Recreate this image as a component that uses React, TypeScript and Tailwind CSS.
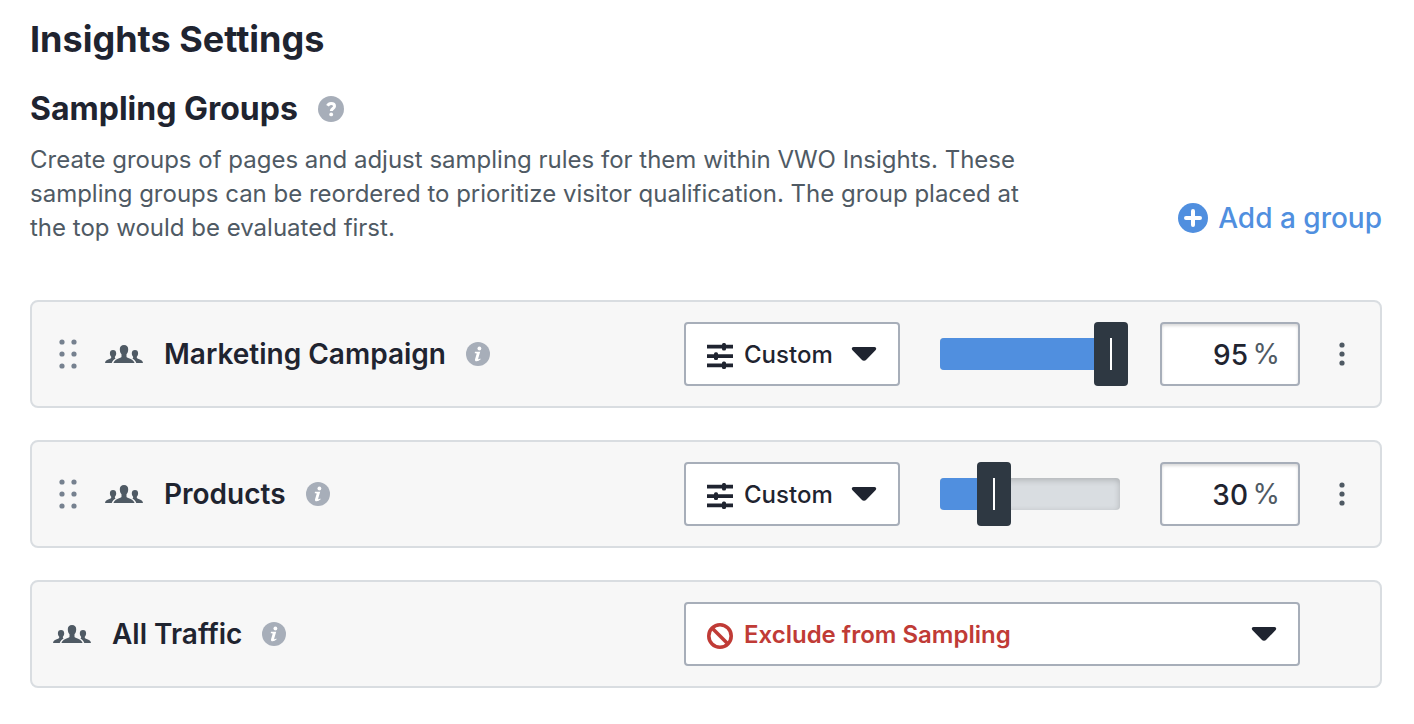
import { useState } from 'react';

type Group = {
  id: string;
  name: string;
  mode: 'custom' | 'exclude';
  rate: number;
};

const initialGroups: Group[] = [
  { id: 'marketing', name: 'Marketing Campaign', mode: 'custom', rate: 95 },
  { id: 'products', name: 'Products', mode: 'custom', rate: 30 },
];

function HelpIcon() {
  return (
    <svg viewBox="0 0 26 26" className="w-[26px] h-[26px]" aria-hidden="true">
      <circle cx="13" cy="13" r="13" fill="#a7aeb9" />
      <path
        d="M9.500 9.800C10.300 8.300 11.500 7.500 13.100 7.500c2 0 3.400 1 3.400 2.700 0 2.400-3.200 2.100-3.200 4.800"
        fill="none"
        stroke="#fff"
        strokeWidth="3"
      />
      <circle cx="13.200" cy="18.400" r="1.900" fill="#fff" />
    </svg>
  );
}

function InfoIcon() {
  return (
    <svg viewBox="0 0 24 24" className="w-6 h-6" aria-hidden="true">
      <circle cx="12" cy="12" r="12" fill="#a7aeb9" />
      <circle cx="13.400" cy="6.500" r="1.900" fill="#fff" />
      <path d="M9 9.800h5.200l-2 6.800c-.2.700.1.900.6.700.5-.2.900-.5 1.400-.9l.5.800c-1.300 1.300-2.700 2-4 2-1.500 0-2-.9-1.600-2.300l1.500-5c.1-.5-.1-.7-.6-.7H8.700z" fill="#fff" />
    </svg>
  );
}

function PeopleIcon() {
  return (
    <svg viewBox="0 0 38 18" className="w-[38px] h-[18px]" fill="#4f5a64" aria-hidden="true">
      <path d="M19 0c2.700 0 4.300 1.700 4.200 4.300 0 2.200-.6 3.800-1.700 5v2.100c0 .7.400 1 1.200 1.300 3.500 1.200 6 2.300 6.900 5.300H8.400c.9-3 3.400-4.100 6.900-5.300.8-.3 1.200-.6 1.200-1.300V9.300c-1.100-1.200-1.700-2.800-1.700-5C14.700 1.700 16.300 0 19 0z" />
      <path d="M8 5c2 0 3.300 1.200 3.200 3.300 0 1.600-.5 2.700-1.300 3.500v1c0 .4.300.6.800.8-1.800 1-3.200 2.200-4 4.400H0c.3-2.300 1.700-3.100 4.300-4 1.300-.4 1.900-.8 1.900-1.500v-.7c-.8-.9-1.300-2-1.300-3.500C4.800 6.200 6 5 8 5z" />
      <path d="M30 5c-2 0-3.300 1.200-3.200 3.300 0 1.600.5 2.700 1.300 3.500v1c0 .4-.3.6-.8.8 1.800 1 3.200 2.200 4 4.400H38c-.3-2.300-1.700-3.100-4.300-4-1.300-.4-1.900-.8-1.900-1.500v-.7c.8-.9 1.300-2 1.300-3.500C33.200 6.200 32 5 30 5z" />
    </svg>
  );
}

function PlusIcon() {
  return (
    <svg viewBox="0 0 30 30" className="w-[30px] h-[30px]" aria-hidden="true">
      <circle cx="15" cy="15" r="15" fill="#508fdf" />
      <path d="M15 8v14M8 15h14" stroke="#fff" strokeWidth="4" strokeLinecap="round" />
    </svg>
  );
}

function DotsGrid() {
  return (
    <svg viewBox="0 0 18 30" className="w-[18px] h-[30px]" fill="#76818f" aria-hidden="true">
      {[3, 15, 27].map((y) => (
        <g key={y}>
          <circle cx="3" cy={y} r="2.600" />
          <circle cx="15" cy={y} r="2.600" />
        </g>
      ))}
    </svg>
  );
}

function MoreIcon() {
  return (
    <svg viewBox="0 0 6 24" className="w-[6px] h-6" fill="#4f5a64" aria-hidden="true">
      <circle cx="3" cy="3" r="2.600" />
      <circle cx="3" cy="12" r="2.600" />
      <circle cx="3" cy="21" r="2.600" />
    </svg>
  );
}

function SlidersIcon() {
  return (
    <svg viewBox="0 0 26 26" className="w-[26px] h-[26px]" fill="#1f2430" aria-hidden="true">
      <path d="M0 1.800h26v3.800H0zM0 11.200h26V15H0zM0 20.500h26v3.800H0z" />
      <rect x="15" y="0" width="4" height="7.400" rx="1.500" />
      <rect x="7" y="9.300" width="4" height="7.600" rx="1.500" />
      <rect x="15" y="18.600" width="4" height="7.400" rx="1.500" />
    </svg>
  );
}

function BanIcon() {
  return (
    <svg viewBox="0 0 26 26" className="w-[26px] h-[26px]" fill="none" stroke="#c03b36" strokeWidth="3.600" aria-hidden="true">
      <circle cx="13" cy="13" r="11.200" />
      <path d="M5 5l16 16" />
    </svg>
  );
}

function CaretIcon() {
  return (
    <svg viewBox="0 0 26 14" className="w-[26px] h-[14px]" fill="#1f2430" aria-hidden="true">
      <path d="M2.500 0h21c1.600 0 2.200 1.700 1.200 2.900l-9.200 9.700c-1.500 1.600-3.500 1.600-5 0L1.300 2.900C.3 1.700.9 0 2.500 0z" />
    </svg>
  );
}

function ModeSelect({ name, mode, onChange, className }: {
  name: string;
  mode: Group['mode'];
  onChange: (mode: Group['mode']) => void;
  className: string;
}) {
  return (
    <div className={`relative ${className}`}>
      <select
        aria-label={`Sampling mode for ${name}`}
        value={mode}
        onChange={(e) => onChange(e.target.value as Group['mode'])}
        className={`w-full h-16 pt-[2px] pl-[58px] pr-12 appearance-none bg-white border-2 border-[#a7aeb9] rounded text-2xl cursor-pointer ${
          mode === 'custom' ? 'font-medium text-[#1f2430]' : 'font-semibold text-[#c03b36]'
        }`}
      >
        <option value="custom">Custom</option>
        <option value="exclude">Exclude from Sampling</option>
      </select>
      <span className="absolute left-[23px] top-[21px] pointer-events-none">
        {mode === 'custom' ? <SlidersIcon /> : <BanIcon />}
      </span>
      <span className="absolute right-[23px] top-[25px] pointer-events-none">
        <CaretIcon />
      </span>
    </div>
  );
}

function RateSlider({ name, rate, onChange }: {
  name: string;
  rate: number;
  onChange: (rate: number) => void;
}) {
  return (
    <div className="relative w-[180px] h-16 shrink-0 flex items-center">
      <div className="w-full h-8 rounded bg-[#d9dde1] shadow-[inset_0_2px_6px_rgba(0,0,0,0.2)] overflow-hidden">
        <div className="h-full bg-[#508fdf]" style={{ width: `${rate}%` }} />
      </div>
      {/* wider than the track by half a thumb on each side, so the thumb centers on the value */}
      <input
        type="range"
        min={0}
        max={100}
        value={rate}
        aria-label={`Sampling rate slider for ${name}`}
        onChange={(e) => onChange(Number(e.target.value))}
        className="absolute top-0 -left-[17px] w-[214px] h-16 appearance-none bg-transparent cursor-pointer [&::-webkit-slider-thumb]:appearance-none [&::-webkit-slider-thumb]:w-[34px] [&::-webkit-slider-thumb]:h-16 [&::-webkit-slider-thumb]:rounded [&::-webkit-slider-thumb]:bg-[#2e3842] [&::-webkit-slider-thumb]:bg-[linear-gradient(#fff,#fff)] [&::-webkit-slider-thumb]:bg-[length:2px_32px] [&::-webkit-slider-thumb]:bg-center [&::-webkit-slider-thumb]:bg-no-repeat"
      />
    </div>
  );
}

function GroupName({ name }: { name: string }) {
  return (
    <>
      <PeopleIcon />
      <h3 className="ml-[21px] text-[28px] leading-9 font-semibold text-[#1f2430] whitespace-nowrap">{name}</h3>
      <button type="button" aria-label={`About ${name}`} className="ml-5 cursor-pointer">
        <InfoIcon />
      </button>
    </>
  );
}

export default function App() {
  const [groups, setGroups] = useState(initialGroups);
  const [allTraffic, setAllTraffic] = useState<Group['mode']>('exclude');

  const update = (id: string, patch: Partial<Group>) =>
    setGroups(groups.map((g) => (g.id === id ? { ...g, ...patch } : g)));

  return (
    <main className="min-h-screen bg-white pl-[30px] pr-8 pt-[15px] pb-9 font-['Inter','Liberation_Sans',sans-serif] text-[#1f2430]">
      <h1 className="text-4xl leading-12 font-bold">Insights Settings</h1>

      <div className="flex items-end justify-between mt-[22px]">
        <div className="max-w-[1000px]">
          <div className="flex items-center">
            <h2 className="text-[32px] leading-12 font-bold">Sampling Groups</h2>
            <button type="button" aria-label="Help with sampling groups" className="ml-5 cursor-pointer">
              <HelpIcon />
            </button>
          </div>
          <p className="mt-[10px] text-2xl leading-[34px] text-[#4f5a64]">
            Create groups of pages and adjust sampling rules for them within VWO Insights. These sampling groups can be
            reordered to prioritize visitor qualification. The group placed at the top would be evaluated first.
          </p>
        </div>
        <button type="button" className="flex items-center gap-[10px] mb-[9px] text-[28px] leading-9 font-medium text-[#508fdf] whitespace-nowrap cursor-pointer">
          <PlusIcon />
          Add a group
        </button>
      </div>

      <ul className="mt-[55px] space-y-8">
        {groups.map((group) => (
          <li key={group.id} className="flex items-center h-[108px] bg-[#f7f7f7] border-2 border-[#d9dde1] rounded-lg">
            <div className="flex-1 flex items-center pl-[27px]">
              <button type="button" aria-label={`Reorder ${group.name}`} className="mr-7 cursor-grab">
                <DotsGrid />
              </button>
              <GroupName name={group.name} />
            </div>
            <div className="flex items-center gap-10">
              <ModeSelect
                name={group.name}
                mode={group.mode}
                onChange={(mode) => update(group.id, { mode })}
                className="w-[216px]"
              />
              <RateSlider name={group.name} rate={group.rate} onChange={(rate) => update(group.id, { rate })} />
              <label className="relative w-[140px]">
                <input
                  type="text"
                  inputMode="numeric"
                  value={group.rate}
                  aria-label={`Sampling rate for ${group.name}`}
                  onChange={(e) => update(group.id, { rate: Math.min(100, Number(e.target.value) || 0) })}
                  className="w-full h-16 pt-[2px] pr-[50px] bg-white border-2 border-[#a7aeb9] rounded shadow-[inset_0_2px_3px_rgba(0,0,0,0.15)] text-right text-[28px] font-medium"
                />
                <span className="absolute right-5 top-0 leading-16 text-[28px] text-[#4f5a64]">%</span>
              </label>
            </div>
            <button type="button" aria-label={`More actions for ${group.name}`} className="w-20 h-16 pl-1 flex items-center justify-center cursor-pointer">
              <MoreIcon />
            </button>
          </li>
        ))}
        <li className="flex items-center h-[108px] pr-20 bg-[#f7f7f7] border-2 border-[#d9dde1] rounded-lg">
          <div className="flex-1 flex items-center pl-[21px]">
            <GroupName name="All Traffic" />
          </div>
          <ModeSelect name="All Traffic" mode={allTraffic} onChange={setAllTraffic} className="w-[616px]" />
        </li>
      </ul>
    </main>
  );
}
